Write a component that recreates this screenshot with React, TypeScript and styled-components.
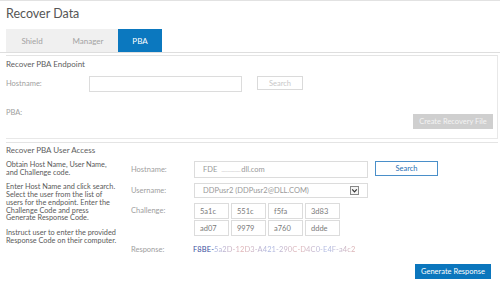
import styled, { createGlobalStyle } from "styled-components"

const GlobalStyle = createGlobalStyle`
  body {
    margin: 0;
    background: #fff;
    font-family: Lato, "Open Sans", "Liberation Sans", sans-serif;
  }
`

const Page = styled.div`
  width: 500px;
  height: 283px;
  overflow: hidden;
  border-top: 1px solid #e2e2e2;
  box-sizing: border-box;
`

const Title = styled.h1`
  margin: 0 0 0 6px;
  height: 28px;
  padding-top: 5px;
  box-sizing: border-box;
  font-size: 12.5px;
  line-height: 16px;
  font-weight: 400;
  color: #555;
`

const TabBar = styled.div`
  display: flex;
  height: 23px;
  padding-left: 6px;
  border-bottom: 1px solid #dedede;
`

const Tab = styled.div<{ $active?: boolean; $width: number }>`
  width: ${(p) => p.$width}px;
  display: flex;
  align-items: center;
  justify-content: center;
  font-size: 8px;
  color: ${(p) => (p.$active ? "#fff" : "#a3a3a3")};
  background: ${(p) => (p.$active ? "#0b78bf" : "#f0f0f0")};
`

const Panel = styled.section<{ $boxed?: boolean }>`
  margin: ${(p) => (p.$boxed ? "2px" : "3px")} 2px 0 6px;
  padding: ${(p) => (p.$boxed ? "2px 4px 9px 0" : "1px 5px 0 0")};
  border-top: 1px solid #e4e4e4;
  border-right: ${(p) => (p.$boxed ? "1px solid #e8e8e8" : "none")};
  border-bottom: ${(p) => (p.$boxed ? "1px solid #e8e8e8" : "none")};
`

const PanelHeader = styled.h2`
  margin: 0;
  font-size: 8px;
  line-height: 12px;
  font-weight: 400;
  color: #5e5e5e;
`

const Row = styled.div<{ $top?: number; $align?: string }>`
  display: flex;
  align-items: ${(p) => p.$align || "center"};
  margin-top: ${(p) => p.$top || 0}px;
`

const Label = styled.div<{ $width: number }>`
  width: ${(p) => p.$width}px;
  flex: none;
  font-size: 7.5px;
  line-height: 10px;
  color: #a0a0a0;
`

const Input = styled.div<{ $width: number; $height?: number }>`
  width: ${(p) => p.$width}px;
  height: ${(p) => p.$height || 16}px;
  box-sizing: border-box;
  border: 1px solid #dcdcdc;
  display: flex;
  align-items: center;
  padding: 0 8px;
  font-size: 7.5px;
  color: #999;
`

const Faint = styled.span`
  color: #d4d4d4;
  letter-spacing: -0.5px;
  margin: 0 1px 0 4px;
`

const GhostButton = styled.div<{ $primary?: boolean; $width: number }>`
  width: ${(p) => p.$width}px;
  height: ${(p) => (p.$primary ? 15 : 14)}px;
  box-sizing: border-box;
  border: 1px solid ${(p) => (p.$primary ? "#4a8fc9" : "#dadada")};
  display: flex;
  align-items: center;
  justify-content: center;
  font-size: 7.5px;
  color: ${(p) => (p.$primary ? "#1f6fb4" : "#c8c8c8")};
  background: #fff;
`

const SolidButton = styled.div<{ $disabled?: boolean; $width: number }>`
  width: ${(p) => p.$width}px;
  height: 15px;
  display: flex;
  align-items: center;
  justify-content: center;
  font-size: 7.5px;
  color: ${(p) => (p.$disabled ? "#f4f4f4" : "#fff")};
  background: ${(p) => (p.$disabled ? "#cfcfcf" : "#0b76bd")};
`

const FooterRow = styled.div<{ $top: number }>`
  display: flex;
  justify-content: space-between;
  align-items: flex-start;
  margin-top: ${(p) => p.$top}px;
`

const Body = styled.div`
  display: flex;
  gap: 13px;
  margin-top: 5px;
`

const HelpColumn = styled.div`
  width: 112px;
  flex: none;
  font-size: 7.3px;
  line-height: 7.7px;
  color: #5a5a5a;

  p {
    margin: 0 0 7px;
  }
`

const Form = styled.div`
  display: flex;
  flex-direction: column;
`

const DropIcon = styled.svg`
  margin-left: auto;
  flex: none;
`

const ChallengeGrid = styled.div`
  display: grid;
  grid-template-columns: repeat(4, 35px);
  column-gap: 2px;
  row-gap: 1px;
`

const Cell = styled.div`
  height: 16px;
  box-sizing: border-box;
  border: 1px solid #dcdcdc;
  display: flex;
  align-items: center;
  padding-left: 5px;
  font-size: 7.5px;
  color: #7a7a7a;
`

const Response = styled.div`
  font-size: 7.5px;
  line-height: 10px;
  letter-spacing: 0.1px;
`

const Code = styled.span`
  color: #3b4f9e;
`

const Redacted = styled.span`
  background: linear-gradient(90deg, #a3b0e0, #e0b0b0 20%, #a8b5e2 40%, #e2b4b4 60%, #aab8e4 80%, #dcb0b0);
  -webkit-background-clip: text;
  background-clip: text;
  color: transparent;
`

const Actions = styled.div`
  display: flex;
  justify-content: flex-end;
  margin-top: 9px;
  padding-right: 2px;
`

const challenge = ["5a1c", "551c", "f5fa", "3d83", "ad07", "9979", "a760", "ddde"]

export default function App() {
  return (
    <Page>
      <GlobalStyle />
      <Title>Recover Data</Title>
      <TabBar>
        <Tab $width={52}>Shield</Tab>
        <Tab $width={60}>Manager</Tab>
        <Tab $width={44} $active>PBA</Tab>
      </TabBar>

      <Panel $boxed>
        <PanelHeader>Recover PBA Endpoint</PanelHeader>
        <Row $top={6} $align="flex-start">
          <Label $width={83} style={{ lineHeight: "16px" }}>Hostname:</Label>
          <Input $width={153} />
          <div style={{ width: 15 }} />
          <GhostButton $width={46}>Search</GhostButton>
        </Row>
        <FooterRow $top={16}>
          <Label $width={40}>PBA:</Label>
          <SolidButton $disabled $width={80} style={{ marginTop: 6 }}>
            Create Recovery File
          </SolidButton>
        </FooterRow>
      </Panel>

      <Panel>
        <PanelHeader>Recover PBA User Access</PanelHeader>
        <Body>
          <HelpColumn>
            <p>Obtain Host Name, User Name, and Challenge code.</p>
            <p>
              Enter Host Name and click search. Select the user from the list of
              users for the endpoint. Enter the Challenge Code and press
              Generate Response Code.
            </p>
            <p>Instruct user to enter the provided Response Code on their computer.</p>
          </HelpColumn>
          <Form>
            <Row>
              <Label $width={63}>Hostname:</Label>
              <Input $width={174} $height={17}>
                FDE<Faint>...............</Faint>dll.com
              </Input>
              <div style={{ width: 7 }} />
              <GhostButton $primary $width={63} style={{ alignSelf: "flex-start" }}>
                Search
              </GhostButton>
            </Row>
            <Row $top={5}>
              <Label $width={63}>Username:</Label>
              <Input $width={174} $height={15}>
                DDPusr2 (DDPusr2@DLL.COM)
                <DropIcon width="9" height="9" viewBox="0 0 9 9">
                  <rect x="0.5" y="0.5" width="8" height="8" fill="#f4f4f4" stroke="#888" />
                  <path d="M2.2 3.3 L4.5 5.8 L6.8 3.3" fill="none" stroke="#333" strokeWidth="1.2" />
                </DropIcon>
              </Input>
            </Row>
            <Row $top={5} $align="flex-start">
              <Label $width={63} style={{ lineHeight: "16px" }}>Challenge:</Label>
              <ChallengeGrid>
                {challenge.map((c) => (
                  <Cell key={c}>{c}</Cell>
                ))}
              </ChallengeGrid>
            </Row>
            <Row $top={9}>
              <Label $width={62}>Response:</Label>
              <Response>
                <Code>F8BE-</Code>
                <Redacted>5a2D-12D3-A421-290C-D4C0-E4F-a4c2</Redacted>
              </Response>
            </Row>
          </Form>
        </Body>
        <Actions>
          <SolidButton $width={76}>Generate Response</SolidButton>
        </Actions>
      </Panel>
    </Page>
  )
}
